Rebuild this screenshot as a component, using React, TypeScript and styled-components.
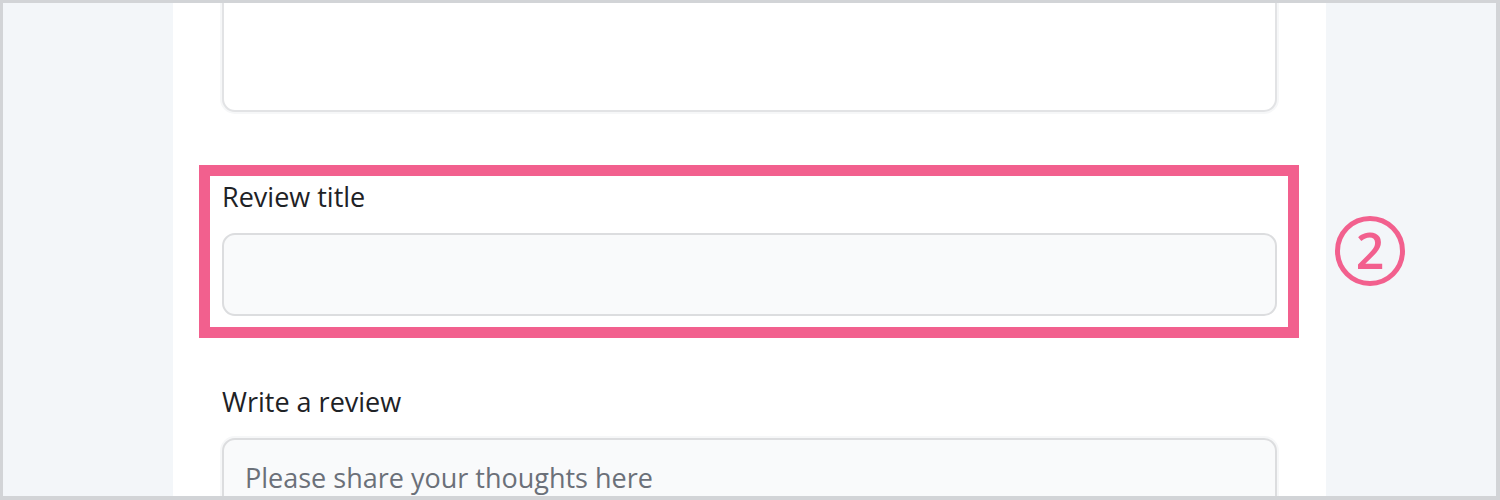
import React from "react";
import styled, { createGlobalStyle } from "styled-components";

const Global = createGlobalStyle`
  html, body { margin: 0; padding: 0; }
  body { font-family: "Open Sans", "Noto Sans", sans-serif; }
  * { box-sizing: border-box; }
`;

const Frame = styled.div`
  width: 1500px;
  height: 500px;
  border-style: solid;
  border-color: #d2d4d7;
  border-width: 3px 4px 4px 3px;
  background: #f3f6f9;
  display: flex;
  justify-content: center;
  overflow: hidden;
`;

const Panel = styled.main`
  width: 1153px;
  background: #ffffff;
  padding: 0 49px;
  display: flex;
  flex-direction: column;
`;

const TopArea = styled.div`
  width: 100%;
  height: 139px;
  margin-top: -30px;
  flex-shrink: 0;
  border: 2px solid #e2e3e5;
  border-radius: 13px;
  background: #ffffff;
  box-shadow: 0 0 0 2px #f6f7f8;
`;

const Highlight = styled.section`
  position: relative;
  margin: 53px -22px 0 -23px;
  border: 11px solid #f2608e;
  padding: 5px 11px 11px 12px;
`;

const Label = styled.label`
  display: block;
  font-size: 27px;
  line-height: 32px;
  color: #1e2226;
  margin-bottom: 20px;
`;

const Input = styled.div`
  height: 83px;
  border: 2px solid #dcdddf;
  border-radius: 13px;
  background: #f9fafb;
`;

const Marker = styled.span`
  position: absolute;
  left: calc(100% + 47px);
  top: 40px;
  width: 70px;
  height: 70px;
  padding-bottom: 3px;
  border-radius: 50%;
  border: 5px solid #f2608e;
  color: #f2608e;
  display: flex;
  align-items: center;
  justify-content: center;
  font-family: "Open Sans", sans-serif;
  font-size: 50px;
  font-weight: 600;
  line-height: 1;
`;

const Field = styled.div`
  margin-top: 48px;
`;

const Area = styled.div`
  height: 120px;
  border: 2px solid #dcdddf;
  border-radius: 13px;
  background: #f9fafb;
  box-shadow: 0 0 0 2px #f6f7f8;
  padding: 22px 21px;
  font-size: 27px;
  line-height: 32px;
  color: #6b7079;
`;

export default function App() {
  return (
    <>
      <Global />
      <Frame>
        <Panel>
          <TopArea />
          <Highlight>
            <Label>Review title</Label>
            <Input />
            <Marker>2</Marker>
          </Highlight>
          <Field>
            <Label>Write a review</Label>
            <Area>Please share your thoughts here</Area>
          </Field>
        </Panel>
      </Frame>
    </>
  );
}
